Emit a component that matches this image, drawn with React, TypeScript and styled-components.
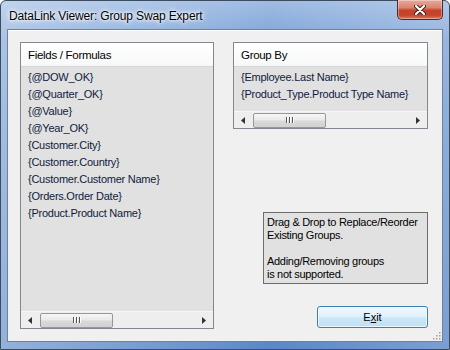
import styled, { createGlobalStyle } from 'styled-components';

const GlobalStyle = createGlobalStyle`
  html, body {
    margin: 0;
    padding: 0;
    background: #ffffff;
  }
  body {
    font-family: "Liberation Sans", Arial, sans-serif;
  }
`;

const fields = [
  '{@DOW_OK}',
  '{@Quarter_OK}',
  '{@Value}',
  '{@Year_OK}',
  '{Customer.City}',
  '{Customer.Country}',
  '{Customer.Customer Name}',
  '{Orders.Order Date}',
  '{Product.Product Name}',
];

const groups = ['{Employee.Last Name}', '{Product_Type.Product Type Name}'];

const Window = styled.div`
  position: relative;
  box-sizing: border-box;
  width: 450px;
  height: 350px;
  display: flex;
  flex-direction: column;
  border: 1px solid #3b4b60;
  border-radius: 6px 6px 0 0;
  padding: 0 6px 7px 6px;
  background:
    linear-gradient(90deg, rgba(255, 255, 255, 0.35) 0%, rgba(255, 255, 255, 0.1) 45%, rgba(255, 255, 255, 0) 60%, rgba(255, 255, 255, 0.2) 100%),
    linear-gradient(180deg, #9fbce3 0%, #7ca2d7 12%, #6b95cf 50%, #5a87c7 100%);
`;

const TitleBar = styled.div`
  height: 28px;
  display: flex;
  justify-content: space-between;
  align-items: flex-start;
`;

const Title = styled.div`
  padding: 8px 0 0 2px;
  font-size: 12px;
  letter-spacing: -0.15px;
  color: #000;
  text-shadow: 0 0 6px #ffffff, 0 0 4px #ffffff, 0 0 2px rgba(255, 255, 255, 0.9);
`;

const CloseButton = styled.div`
  box-sizing: border-box;
  width: 46px;
  height: 20px;
  margin-top: -1px;
  border: 1px solid #4d2a2a;
  border-top: none;
  border-radius: 0 0 5px 5px;
  display: flex;
  align-items: center;
  justify-content: center;
  background: linear-gradient(180deg, #e9a99b 0%, #d98472 40%, #c3432b 55%, #c5452c 80%, #dd7a5b 100%);
  box-shadow: inset 0 0 0 1px rgba(255, 255, 255, 0.35);
`;

const Client = styled.div`
  position: relative;
  flex: 1;
  display: flex;
  gap: 19px;
  padding: 12px 14px 12px 12px;
  background: #f0f0f0;
  border: 1px solid #6f829c;
  box-shadow: inset 0 1px 0 #ffffff;
`;

const ListBox = styled.div<{ $width?: number; $height?: number }>`
  box-sizing: border-box;
  display: flex;
  flex-direction: column;
  flex: none;
  width: ${(p) => (p.$width ? `${p.$width}px` : 'auto')};
  height: ${(p) => (p.$height ? `${p.$height}px` : 'auto')};
  border: 1px solid #828790;
  background: #e1e1e1;
`;

const ListHeader = styled.div`
  height: 23px;
  flex: none;
  display: flex;
  align-items: center;
  padding-left: 7px;
  font-size: 11.5px;
  letter-spacing: -0.3px;
  color: #000;
  background: linear-gradient(180deg, #ffffff 0%, #f7f8f9 100%);
  border-bottom: 1px solid #d5d5d5;
`;

const ListBody = styled.div`
  flex: 1;
  min-width: 0;
  padding: 2px 0 0 7px;
  overflow: hidden;
`;

const ListItem = styled.div`
  height: 17px;
  line-height: 17px;
  font-size: 11px;
  letter-spacing: -0.25px;
  color: #101a40;
  white-space: nowrap;
`;

const ScrollBar = styled.div`
  flex: none;
  height: 17px;
  display: flex;
  align-items: center;
  background: #eeeeee;
  border-top: 1px solid #f7f7f7;
  box-sizing: border-box;
`;

const ArrowButton = styled.div`
  width: 18px;
  height: 16px;
  flex: none;
  display: flex;
  align-items: center;
  justify-content: center;
`;

const Track = styled.div`
  flex: 1;
  height: 100%;
  display: flex;
  align-items: center;
`;

const Thumb = styled.div`
  box-sizing: border-box;
  width: 73px;
  height: 15px;
  margin-left: 1px;
  border: 1px solid #979797;
  border-radius: 2px;
  display: flex;
  align-items: center;
  justify-content: center;
  gap: 1px;
  background: linear-gradient(180deg, #f6f6f6 0%, #eaeaea 45%, #d9d9d9 55%, #d2d2d2 100%);
`;

const Grip = styled.span`
  width: 1px;
  height: 6px;
  background: #555;
  box-shadow: 1px 0 0 #ffffff;
  margin-right: 1px;
`;

const RightColumn = styled.div`
  flex: 1;
  min-width: 0;
  display: flex;
  flex-direction: column;
  align-items: flex-end;
`;

const GroupBox = styled(ListBox)`
  align-self: stretch;
`;

const InfoBox = styled.div`
  box-sizing: border-box;
  width: 165px;
  height: 72px;
  margin-top: 83px;
  padding: 3px 3px;
  border: 1px solid #6d6d6d;
  background: #e1e1e1;
  font-size: 11px;
  letter-spacing: -0.3px;
  line-height: 13px;
  white-space: nowrap;
  color: #000;
`;

const Blank = styled.div`
  height: 13px;
`;

const ExitButton = styled.button`
  box-sizing: border-box;
  width: 111px;
  height: 22px;
  margin-top: 22px;
  border: 1px solid #3c7fb1;
  border-radius: 3px;
  font-family: "Liberation Sans", Arial, sans-serif;
  font-size: 11px;
  color: #000;
  background: linear-gradient(180deg, #edf7fd 0%, #e3f2fc 45%, #cbe7f8 55%, #c0e0f5 100%);
  box-shadow: inset 0 0 0 1px rgba(255, 255, 255, 0.7);
  padding: 0;
`;

const ResizeGrip = styled.svg`
  position: absolute;
  right: 1px;
  bottom: 1px;
`;

const LeftArrow = () => (
  <svg width="4" height="7" viewBox="0 0 4 7">
    <path d="M4 0 L0 3.5 L4 7 Z" fill="#333" />
  </svg>
);

const RightArrow = () => (
  <svg width="4" height="7" viewBox="0 0 4 7">
    <path d="M0 0 L4 3.5 L0 7 Z" fill="#333" />
  </svg>
);

const HScroll = () => (
  <ScrollBar>
    <ArrowButton>
      <LeftArrow />
    </ArrowButton>
    <Track>
      <Thumb>
        <Grip />
        <Grip />
        <Grip />
      </Thumb>
    </Track>
    <ArrowButton>
      <RightArrow />
    </ArrowButton>
  </ScrollBar>
);

const App = () => {
  return (
    <>
      <GlobalStyle />
      <Window>
        <TitleBar>
          <Title>DataLink Viewer: Group Swap Expert</Title>
          <CloseButton>
            <svg width="12" height="10" viewBox="0 0 12 10">
              <path d="M2 1 L10 9 M10 1 L2 9" stroke="#3a1a1a" strokeWidth="4" strokeLinecap="round" />
              <path d="M2 1 L10 9 M10 1 L2 9" stroke="#ffffff" strokeWidth="2.2" strokeLinecap="round" />
            </svg>
          </CloseButton>
        </TitleBar>
        <Client>
          <ListBox $width={194}>
            <ListHeader>Fields / Formulas</ListHeader>
            <ListBody>
              {fields.map((f) => (
                <ListItem key={f}>{f}</ListItem>
              ))}
            </ListBody>
            <HScroll />
          </ListBox>
          <RightColumn>
            <GroupBox $height={87}>
              <ListHeader>Group By</ListHeader>
              <ListBody>
                {groups.map((g) => (
                  <ListItem key={g}>{g}</ListItem>
                ))}
              </ListBody>
              <HScroll />
            </GroupBox>
            <InfoBox>
              <div>Drag &amp; Drop to Replace/Reorder</div>
              <div>Existing Groups.</div>
              <Blank />
              <div>Adding/Removing groups</div>
              <div>is not supported.</div>
            </InfoBox>
            <ExitButton>
              E<u>x</u>it
            </ExitButton>
          </RightColumn>
          <ResizeGrip width="10" height="10" viewBox="0 0 10 10">
            {[
              [8, 2],
              [5, 5],
              [8, 5],
              [2, 8],
              [5, 8],
              [8, 8],
            ].map(([x, y]) => (
              <rect key={`${x}-${y}`} x={x} y={y} width="1.5" height="1.5" fill="#a0a0a0" />
            ))}
          </ResizeGrip>
        </Client>
      </Window>
    </>
  );
};

export default App;
